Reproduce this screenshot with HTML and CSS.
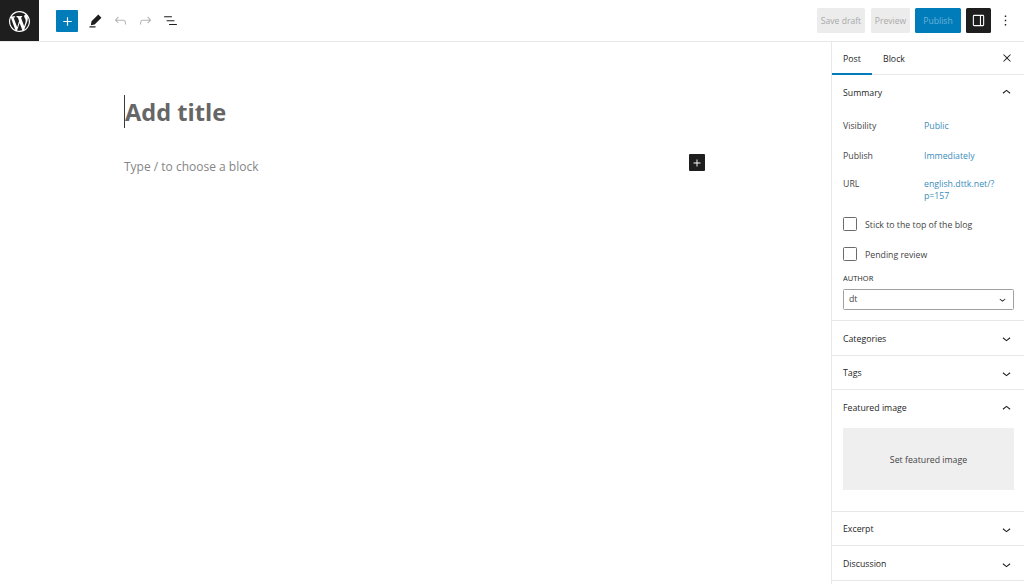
FILE: index.html
```html
<!DOCTYPE html>
<html lang="en">
<head>
<meta charset="utf-8">
<title>Add New Post</title>
<link rel="stylesheet" href="styles.css">
</head>
<body>
<div class="app">
  <header class="topbar">
    <a class="logo"><svg viewBox="0 0 20 20" width="21" height="21"><path fill="#fff" d="M20 10c0-5.51-4.49-10-10-10C4.48 0 0 4.49 0 10c0 5.52 4.48 10 10 10 5.51 0 10-4.48 10-10zM7.780 15.370L4.370 6.220c.55-.02 1.170-.08 1.170-.08.5-.06.44-1.130-.06-1.110 0 0-1.450.11-2.370.11-.18 0-.37 0-.58-.01C4.120 2.690 6.870 1.110 10 1.110c2.330 0 4.450.87 6.050 2.340-.68-.11-1.650.39-1.650 1.580 0 .74.45 1.360.9 2.100.35.61.55 1.360.55 2.460 0 1.490-1.400 5-1.400 5l-3.030-8.370c.54-.02.82-.17.82-.17.5-.05.44-1.250-.06-1.220 0 0-1.440.12-2.380.12-.87 0-2.330-.12-2.330-.12-.5-.03-.56 1.200-.06 1.220l.92.08 1.260 3.410zM17.410 10c.24-.64.74-1.870.43-4.250.7 1.290 1.050 2.710 1.050 4.250 0 3.290-1.730 6.240-4.400 7.780.97-2.590 1.940-5.200 2.920-7.780zM6.100 18.090C3.120 16.650 1.110 13.530 1.110 10c0-1.300.23-2.480.72-3.590C3.250 10.300 4.670 14.200 6.100 18.090zm4.030-6.630l2.580 6.980c-.86.29-1.760.45-2.710.45-.79 0-1.570-.11-2.290-.33.81-2.380 1.620-4.740 2.420-7.100z"/></svg></a>
    <div class="tools">
      <button class="inserter"><svg viewBox="0 0 24 24" width="17" height="17"><path fill="#fff" d="M18 11.200h-5.200V6h-1.600v5.200H6v1.600h5.200V18h1.600v-5.200H18z"/></svg></button>
      <span class="tool"><svg viewBox="0 0 24 24" width="17" height="17"><path fill="#1e1e1e" d="M16 3.600l4.400 4.400-9.600 9.600-5.400 1 1-5.400zM3.500 20h8.500v1.800H3.500z"/></svg></span>
      <span class="tool"><svg viewBox="0 0 24 24" width="17" height="17"><path fill="#b5b5b5" d="M18.300 11.700c-.6-.6-1.400-.9-2.300-.9H6.700l2.900-3.300-1.100-1-4.500 5L8.500 16l1-1-2.700-2.700H16c.5 0 .9.2 1.300.5 1 1 1 3.400 1 4.500v.3h1.500v-.2c0-1.500 0-4.300-1.500-5.700z"/></svg></span>
      <span class="tool"><svg viewBox="0 0 24 24" width="17" height="17"><path fill="#b5b5b5" d="M15.600 6.500l-1.100 1 2.900 3.300H8c-.9 0-1.700.3-2.300.9-1.400 1.500-1.400 4.200-1.400 5.600v.2h1.500v-.3c0-1.100 0-3.500 1-4.500.3-.3.7-.5 1.300-.5h9.200L14.500 15l1.100 1.100 4.600-4.600-4.600-5z"/></svg></span>
      <span class="tool"><svg viewBox="0 0 24 24" width="17" height="17"><path fill="#1e1e1e" d="M3 6h11v1.500H3zM6.500 11.500h11V13h-11zM21 17H10v1.500h11z"/></svg></span>
    </div>
    <div class="actions">
      <button class="btn btn-muted btn-draft">Save draft</button>
      <button class="btn btn-muted btn-preview">Preview</button>
      <button class="btn btn-publish">Publish</button>
      <button class="btn-panel"><svg viewBox="0 0 24 24" width="17" height="17"><path fill="#fff" d="M18 4H6c-1.100 0-2 .9-2 2v12c0 1.100.9 2 2 2h12c1.100 0 2-.9 2-2V6c0-1.100-.9-2-2-2zM5.500 18V6c0-.3.2-.5.5-.5h8v13H6c-.3 0-.5-.2-.5-.5zm13 0c0 .3-.2.5-.5.5h-2.500v-13H18c.3 0 .5.2.5.500z"/></svg></button>
      <span class="more"><svg viewBox="0 0 24 24" width="17" height="17"><path fill="#1e1e1e" d="M13 19h-2v-2h2zm0-6h-2v-2h2zm0-6h-2V5h2z"/></svg></span>
    </div>
  </header>
  <div class="main">
    <main class="editor">
      <div class="canvas">
        <h1 class="title"><span class="caret"></span>Add title</h1>
        <div class="block-row">
          <p class="placeholder">Type / to choose a block</p>
          <button class="block-add"><svg viewBox="0 0 24 24" width="17" height="17"><path fill="#fff" d="M18 11.200h-5.200V6h-1.600v5.200H6v1.600h5.200V18h1.600v-5.200H18z"/></svg></button>
        </div>
      </div>
    </main>
    <aside class="sidebar">
      <div class="tabs">
        <span class="tab tab-active">Post</span>
        <span class="tab">Block</span>
        <svg class="close" viewBox="0 0 24 24" width="12" height="12"><path fill="#1e1e1e" d="M13.300 12l6.400-6.400-1.300-1.300-6.400 6.400-6.400-6.400-1.300 1.300 6.400 6.400-6.400 6.400 1.300 1.300 6.400-6.400 6.400 6.400 1.300-1.300z"/></svg>
      </div>
      <section class="panel panel-summary">
        <div class="panel-head"><span>Summary</span><svg viewBox="0 0 24 24" width="17" height="17"><path fill="#1e1e1e" d="M6.500 12.400L12 8l5.500 4.400-.9 1.200L12 10l-4.500 3.600z"/></svg></div>
        <div class="row row-vis"><span class="row-label">Visibility</span><a class="row-value">Public</a></div>
        <div class="row row-pub"><span class="row-label">Publish</span><a class="row-value">Immediately</a></div>
        <div class="row row-url"><span class="row-label">URL</span><a class="row-value">english.dttk.net/?<br>p=157</a></div>
        <label class="check check-first"><span class="box"></span><span class="check-text">Stick to the top of the blog</span></label>
        <label class="check check-second"><span class="box"></span><span class="check-text">Pending review</span></label>
        <div class="author-label">AUTHOR</div>
        <div class="select"><span>dt</span><svg viewBox="0 0 24 24" width="13" height="13"><path fill="#1e1e1e" d="M17.500 11.600L12 16l-5.500-4.400.9-1.200L12 14l4.600-3.600z"/></svg></div>
      </section>
      <section class="panel"><div class="panel-head"><span>Categories</span><svg viewBox="0 0 24 24" width="17" height="17"><path fill="#1e1e1e" d="M17.500 11.600L12 16l-5.500-4.400.9-1.200L12 14l4.600-3.600z"/></svg></div></section>
      <section class="panel"><div class="panel-head"><span>Tags</span><svg viewBox="0 0 24 24" width="17" height="17"><path fill="#1e1e1e" d="M17.500 11.600L12 16l-5.500-4.400.9-1.200L12 14l4.600-3.600z"/></svg></div></section>
      <section class="panel panel-image">
        <div class="panel-head"><span>Featured image</span><svg viewBox="0 0 24 24" width="17" height="17"><path fill="#1e1e1e" d="M6.500 12.400L12 8l5.500 4.400-.9 1.200L12 10l-4.500 3.600z"/></svg></div>
        <div class="image-box">Set featured image</div>
      </section>
      <section class="panel"><div class="panel-head"><span>Excerpt</span><svg viewBox="0 0 24 24" width="17" height="17"><path fill="#1e1e1e" d="M17.500 11.600L12 16l-5.500-4.400.9-1.200L12 14l4.600-3.600z"/></svg></div></section>
      <section class="panel"><div class="panel-head"><span>Discussion</span><svg viewBox="0 0 24 24" width="17" height="17"><path fill="#1e1e1e" d="M17.500 11.600L12 16l-5.500-4.400.9-1.200L12 14l4.600-3.600z"/></svg></div></section>
    </aside>
  </div>
</div>
</body>
</html>
```
FILE: styles.css
```css
* { box-sizing: border-box; }
html, body { margin: 0; height: 100%; overflow: hidden; }
body { background: #fff; color: #1e1e1e; font-family: "Open Sans", "Noto Sans", sans-serif; font-size: 8.750px; }
button { font-family: inherit; border: 0; padding: 0; margin: 0; }
svg { display: block; flex: none; }
.app { width: 1024px; height: 584px; display: flex; flex-direction: column; }

.topbar { height: 42px; flex: none; display: flex; align-items: flex-start; border-bottom: 1px solid #e8e8e8; }
.logo { width: 39px; height: 41px; background: #1e1e1e; display: flex; align-items: center; justify-content: center; padding: 1px 1px 0 0; }
.tools { display: flex; align-items: center; height: 41px; margin-left: 17px; }
.inserter { width: 22px; height: 22px; background: #007cba; border-radius: 1px; display: flex; align-items: center; justify-content: center; margin-right: 5px; margin-top: 1px; }
.tool { width: 25px; height: 25px; display: flex; align-items: center; justify-content: center; }
.actions { margin-left: auto; display: flex; align-items: center; height: 41px; padding-right: 9px; }
.btn { height: 25px; border-radius: 1.500px; font-size: 8.600px; display: flex; align-items: center; justify-content: center; }
.btn-muted { background: #ececec; color: #a9a9a9; }
.btn-draft { width: 48px; margin-right: 6px; }
.btn-preview { width: 39px; margin-right: 5px; }
.btn-publish { width: 46px; margin-right: 5px; background: #007cba; color: #6fb3d8; }
.btn-panel { width: 25px; height: 25px; background: #1e1e1e; border-radius: 1.500px; display: flex; align-items: center; justify-content: center; margin-right: 2px; }
.more { width: 25px; height: 25px; display: flex; align-items: center; justify-content: center; margin-right: -3px; }

.main { flex: 1; min-height: 0; display: flex; }
.editor { flex: 1; min-width: 0; }
.canvas { padding: 53px 0 0 124px; width: 705px; }
.title { position: relative; margin: 0; font-size: 23.600px; line-height: 34px; font-weight: 700; color: #666; padding-left: 1px; }
.caret { position: absolute; left: 0; top: 0; width: 1px; height: 33px; background: #3a3a3a; }
.block-row { display: flex; justify-content: space-between; align-items: flex-start; margin-top: 28px; }
.placeholder { margin: 0; font-size: 12px; line-height: 18px; color: #858585; margin-top: 1px; }
.block-add { width: 16px; height: 17px; background: #1e1e1e; border-radius: 1px; display: flex; align-items: center; justify-content: center; margin-top: -3px; }
.block-add svg { width: 14px; height: 14px; }

.sidebar { width: 193px; flex: none; border-left: 1px solid #e8e8e8; overflow: hidden; }
.tabs { height: 33px; display: flex; align-items: center; border-bottom: 1px solid #e8e8e8; }
.tab { height: 33px; display: flex; align-items: center; padding: 2px 11px 0; font-weight: 500; }
.tab-active { width: 40px; box-shadow: inset 0 -2px 0 #007cba; }
.close { margin-left: auto; margin-right: 11px; }

.panel { border-bottom: 1px solid #e8e8e8; height: 34.700px; }
.panel-summary { height: 246px; }
.panel-image { height: 121.300px; }
.panel-head { height: 34.500px; display: flex; align-items: center; justify-content: space-between; padding: 1px 9px 0 11px; font-weight: 500; }

.row { display: flex; padding-left: 11px; line-height: 12px; color: #444; }
.row-label { width: 81px; flex: none; }
.row-value { color: #3a8dbb; }
.row-vis { margin-top: 10px; }
.row-pub { margin-top: 18px; }
.row-url { margin-top: 16px; }

.check { display: flex; align-items: center; padding-left: 11px; color: #444; height: 14px; }
.check-text { padding-top: 2px; }
.box { width: 14px; height: 14px; border: 1px solid #6b6b6b; border-radius: 1.500px; margin-right: 8px; flex: none; }
.check-first { margin-top: 15px; }
.check-second { margin-top: 16px; }
.author-label { margin: 11px 0 0 11px; font-size: 7.500px; line-height: 12px; font-weight: 500; }
.select { margin: 5px 10px 0 11px; height: 21px; border: 1px solid #a0a0a0; border-radius: 1.500px; display: flex; align-items: center; justify-content: space-between; padding: 0 4px 0 5px; color: #444; }

.image-box { margin: 3px 10px 0 11px; height: 62px; background: #efefef; display: flex; align-items: center; justify-content: center; color: #444; padding-top: 2px; }
```
